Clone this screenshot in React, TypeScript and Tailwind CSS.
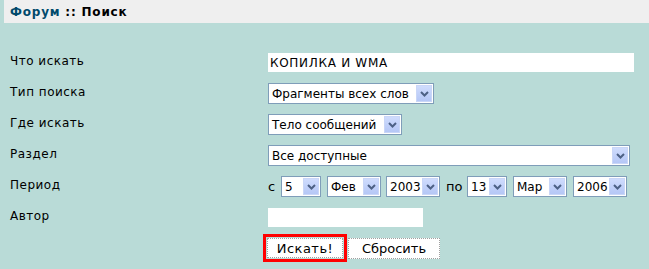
import React from "react";

const font = { fontFamily: '"DejaVu Sans", Verdana, sans-serif' };

function Chevron() {
  return (
    <svg width="9" height="6" viewBox="0 0 9 6">
      <path d="M1 1 L4.5 4.5 L8 1" fill="none" stroke="#4d6185" strokeWidth="2" />
    </svg>
  );
}

function Select({ text, w, h = 21 }: { text: string; w: number; h?: number }) {
  return (
    <div
      className="flex items-stretch border border-[#7f9db9] bg-white shrink-0"
      style={{ width: w, height: h }}
    >
      <div className="flex-1 flex items-center pl-[3px] text-[12px] text-black whitespace-nowrap overflow-hidden leading-none">
        {text}
      </div>
      <div className="w-[16px] m-px flex items-center justify-center bg-gradient-to-b from-[#cfdcfd] to-[#b5c7f6] border border-[#c9d6f7]">
        <Chevron />
      </div>
    </div>
  );
}

function Row({ label, children }: { label: string; children: React.ReactNode }) {
  return (
    <div className="flex h-[31px] items-center">
      <div className="w-[264px] pl-[6px] text-[12px] tracking-[0.5px] text-black -mt-[4px] leading-none">{label}</div>
      <div className="flex items-center">{children}</div>
    </div>
  );
}

export default function App() {
  return (
    <div className="w-[649px] h-[269px] bg-[#b9dbd7] pl-[4px] overflow-hidden" style={font}>
      <div className="h-[23px] bg-[#efefef] flex items-center pl-[6px] text-[12px] tracking-[0.8px] font-bold leading-none">
        <span className="text-[#00496b]">Форум</span>
        <span className="text-black">&nbsp;:: Поиск</span>
      </div>
      <div className="pt-[24px]">
        <Row label="Что искать">
          <div className="w-[366px] h-[19px] bg-white flex items-center pl-[2px] text-[12px] tracking-[0.7px] leading-none text-black">
            КОПИЛКА И WMA
          </div>
        </Row>
        <Row label="Тип поиска">
          <Select text="Фрагменты всех слов" w={166} />
        </Row>
        <Row label="Где искать">
          <Select text="Тело сообщений" w={134} />
        </Row>
        <Row label="Раздел">
          <Select text="Все доступные" w={362} />
        </Row>
        <Row label="Период">
          <span className="text-[13px] leading-none w-[13px]">с</span>
          <Select text="5" w={40} />
          <div className="w-[6px]" />
          <Select text="Фев" w={54} />
          <div className="w-[5px]" />
          <Select text="2003" w={54} />
          <span className="text-[13px] leading-none pl-[6px] w-[27px]">по</span>
          <Select text="13" w={40} />
          <div className="w-[6px]" />
          <Select text="Мар" w={54} />
          <div className="w-[6px]" />
          <Select text="2006" w={54} />
        </Row>
        <Row label="Автор">
          <div className="w-[155px] h-[19px] bg-white" />
        </Row>
        <div className="flex h-[30px] items-center pl-[259px]">
          <div className="border-[3px] border-[#ff0000] p-[1px] w-[84px] h-[28px] flex">
            <div className="flex-1 bg-white border border-dotted border-[#a0a0a0] flex items-center justify-center text-[13px] tracking-[0.5px] leading-none">
              Искать!
            </div>
          </div>
          <div className="ml-[1px] w-[92px] h-[21px] bg-white border border-dotted border-[#a0a0a0] flex items-center justify-center text-[13px] leading-none">
            Сбросить
          </div>
        </div>
      </div>
    </div>
  );
}
